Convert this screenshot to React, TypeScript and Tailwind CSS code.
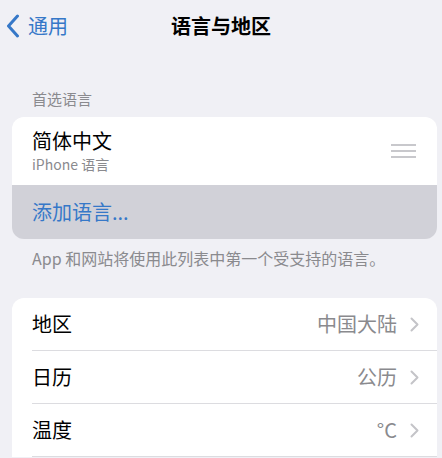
import React from 'react';

const font = { fontFamily: '"Noto Sans CJK SC", "Noto Sans", sans-serif' };

function Chevron() {
  return (
    <svg width="9" height="15" viewBox="0 0 9 15" className="ml-[13px]">
      <path d="M1.5 1.5 L7.5 7.5 L1.5 13.5" fill="none" stroke="#c4c4c8" strokeWidth="2" strokeLinecap="round" strokeLinejoin="round" />
    </svg>
  );
}

function Row({ label, value }: { label: string; value: string }) {
  return (
    <div className="pl-[20px] h-[53px] flex flex-col">
      <div className="flex-1 flex items-center pr-[18px]">
        <span className="text-[20px] text-black flex-1">{label}</span>
        <span className="text-[20px] text-[#8a8a8e]">{value}</span>
        <Chevron />
      </div>
      <div className="h-px bg-[#dcdce0]" />
    </div>
  );
}

export default function App() {
  return (
    <div className="w-[442px] h-[458px] overflow-hidden bg-[#f0f0f5]" style={font}>
      <div className="h-[52px] relative flex items-center">
        <div className="flex items-center pl-[6px] text-[#3678c8]">
          <svg width="14" height="24" viewBox="0 0 14 24">
            <path d="M11.5 2 L2.5 12 L11.5 22" fill="none" stroke="#3678c8" strokeWidth="3" strokeLinecap="round" strokeLinejoin="round" />
          </svg>
          <span className="ml-[8px] text-[20px]">通用</span>
        </div>
        <div className="absolute left-0 right-0 text-center text-[20px] font-bold text-black pointer-events-none">语言与地区</div>
      </div>

      <div className="pl-[32px] pt-[37px] text-[15px] text-[#8a8a8e] leading-[20px]">首选语言</div>

      <div className="ml-[12px] mr-[5px] mt-[8px] rounded-[12px] overflow-hidden">
        <div className="bg-white h-[68px] pl-[20px] pr-[21px] flex items-center">
          <div className="flex-1 flex flex-col">
            <span className="text-[20px] text-black leading-[26px]">简体中文</span>
            <span className="text-[14px] text-[#8a8a8e] leading-[20px]">iPhone 语言</span>
          </div>
          <div className="flex flex-col gap-[4px]">
            <div className="w-[25px] h-[2px] bg-[#c8c8cc]" />
            <div className="w-[25px] h-[2px] bg-[#c8c8cc]" />
            <div className="w-[25px] h-[2px] bg-[#c8c8cc]" />
          </div>
        </div>
        <div className="bg-[#d1d1d8] h-[54px] pl-[20px] flex items-center">
          <span className="text-[20px] text-[#3678c8]">添加语言...</span>
        </div>
      </div>

      <div className="pl-[32px] pt-[8px] text-[16px] text-[#8a8a8e] leading-[22px]">
        App 和网站将使用此列表中第一个受支持的语言。
      </div>

      <div className="ml-[12px] mr-[5px] mt-[29px] bg-white rounded-t-[12px]">
        <Row label="地区" value="中国大陆" />
        <Row label="日历" value="公历" />
        <Row label="温度" value="°C" />
      </div>
    </div>
  );
}
